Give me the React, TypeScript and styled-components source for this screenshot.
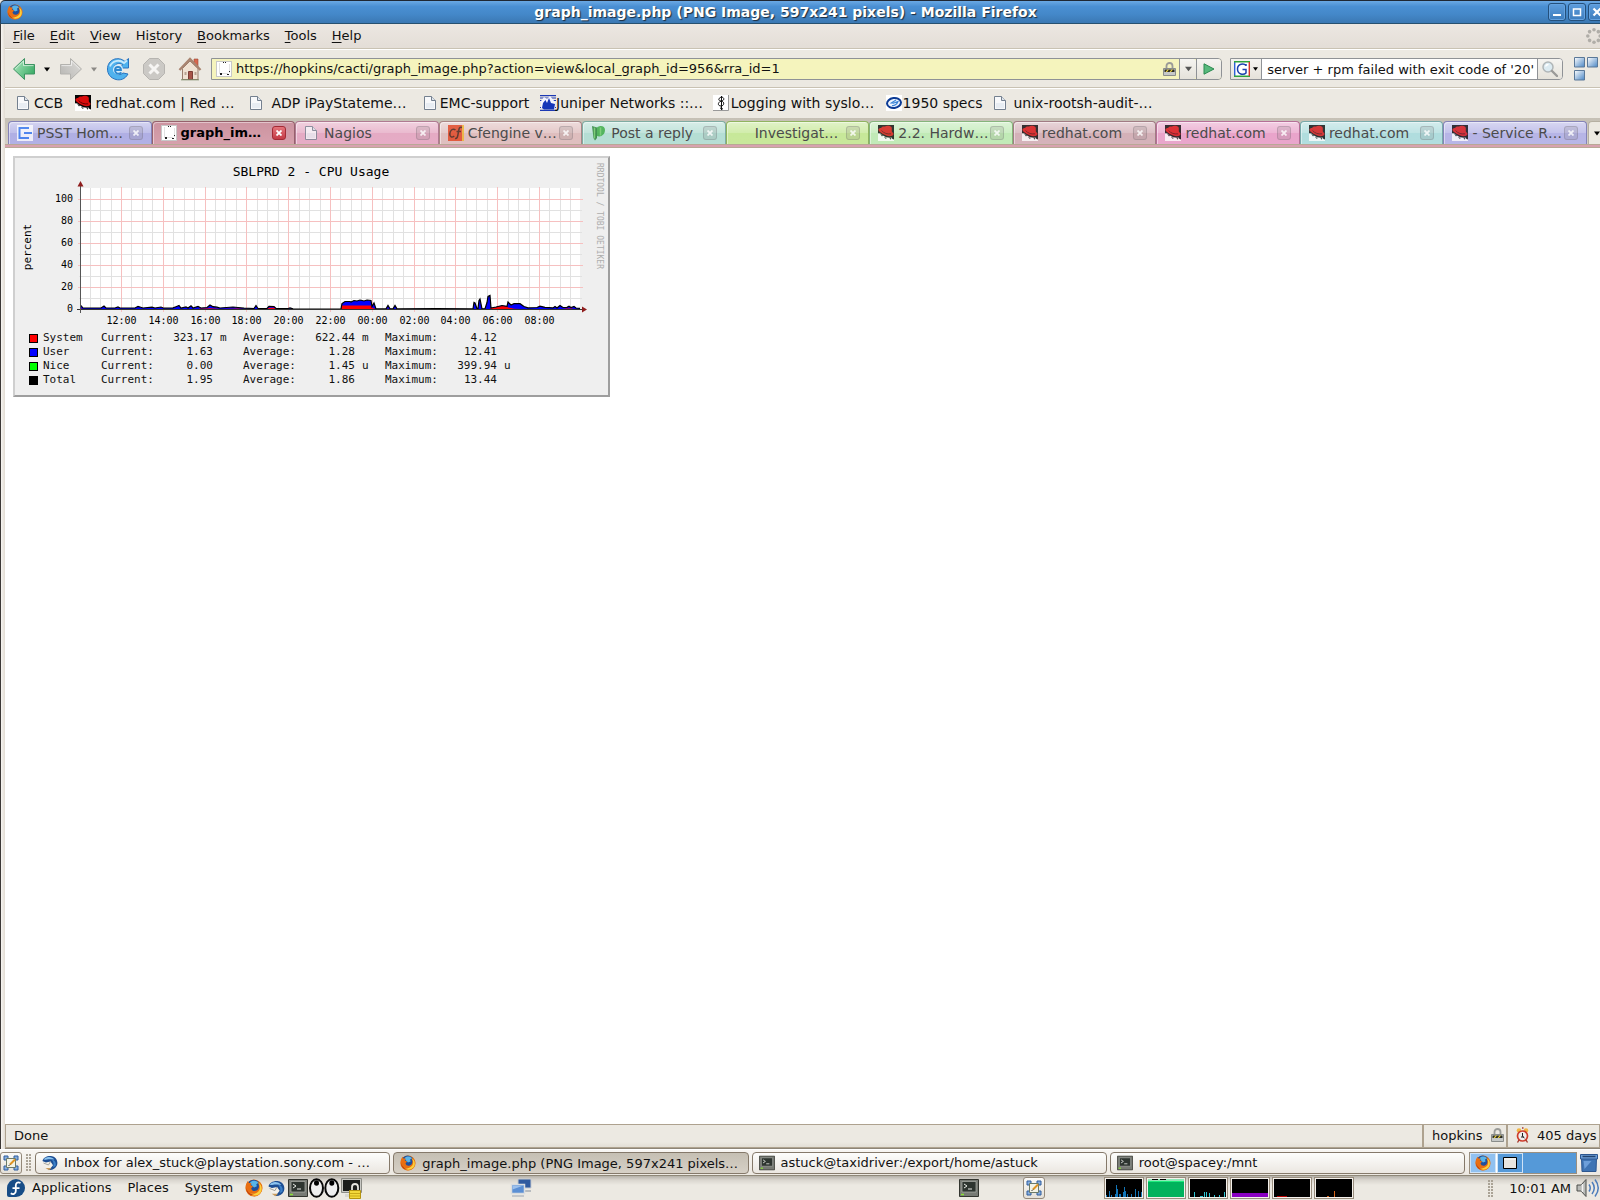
import React from "react";
import styled, { createGlobalStyle, css } from "styled-components";

const GlobalStyle = createGlobalStyle`
  *, *::before, *::after { box-sizing: border-box; }
  body { margin: 0; background: #ece9e2; overflow: hidden; }
  body, button, input { font-family: "DejaVu Sans", sans-serif; font-size: 13px; color: #111; }
  button { padding: 0; margin: 0; border: 0; background: none; }
  svg { display: block; flex: none; }
  a { color: inherit; text-decoration: none; }
`;

/* ---------- layout ---------- */

const Desktop = styled.div`
  min-height: 100vh;
  display: flex;
  flex-direction: column;
  overflow: hidden;
`;

const Window = styled.section`
  flex: 1;
  display: flex;
  flex-direction: column;
`;

const TitleBar = styled.header`
  height: 24px;
  display: flex;
  align-items: center;
  padding: 0 0 0 6px;
  border-top: 1px solid #1f2733;
  border-bottom: 1px solid #27506f;
  border-left: 1px solid #27405a;
  border-top-left-radius: 5px;
  background: linear-gradient(#6aa8e4, #4a8fd3 25%, #4488c9 60%, #3b78b3);
  overflow: hidden;
`;

const WindowTitle = styled.h1`
  flex: 1;
  margin: 0;
  font-size: 14px;
  line-height: 20px;
  text-align: center;
  color: #fff;
  text-shadow: 1px 1px 1px #1c2a3a;
`;

const WindowControls = styled.div`
  display: flex;
  gap: 2px;
  margin-right: -6px;
`;

const ControlButton = styled.button`
  width: 18px;
  height: 18px;
  display: grid;
  place-items: center;
  border: 1px solid #24507c;
  border-radius: 3px;
  background: linear-gradient(#5d9ddd, #3d7dbd);
  box-shadow: inset 0 0 0 1px #64a2e0;
`;

const Body = styled.div`
  flex: 1;
  display: flex;
  flex-direction: column;
  border-left: 1px solid #3c3836;
  padding-left: 4px;
  background: linear-gradient(90deg, #f7f5f2, #e2dcd3 4px);
`;

const barEdge = css`
  border-bottom: 1px solid #fff;
  box-shadow: inset 0 -1px 0 #c9c2b3;
`;

const MenuBar = styled.nav`
  height: 26px;
  display: flex;
  align-items: center;
  padding-bottom: 2px;
  background: linear-gradient(#ece7e2, #e3ddd6);
  overflow: hidden;
  ${barEdge}
`;

const MenuButton = styled.button`
  padding: 0 7px 0 8px;
  line-height: 20px;
  & > u { text-underline-offset: 2px; text-decoration-thickness: 1px; }
`;

const Throbber = styled.div`
  margin-left: auto;
  margin-right: -2px;
`;

const NavBar = styled.div`
  height: 39px;
  display: flex;
  align-items: center;
  padding: 0 2px 0 7px;
  background: #ece9e2;
  overflow: hidden;
  ${barEdge}
`;

const NavButton = styled.button<{ $gap?: number }>`
  width: 24px;
  height: 24px;
  display: grid;
  place-items: center;
  margin-right: ${(p) => p.$gap ?? 0}px;
`;

const NavArrow = styled.button<{ $gap: number }>`
  width: 11px;
  height: 24px;
  display: grid;
  place-items: center;
  margin: 0 ${(p) => p.$gap}px 0 5px;
`;

const AddressBox = styled.form`
  flex: 1;
  display: flex;
  height: 22px;
  border: 1px solid #8f9296;
  border-radius: 0 4px 4px 0;
  background: #f5f4bd;
  align-items: center;
  padding-left: 4px;
`;

const AddressInput = styled.input`
  flex: 1;
  min-width: 0;
  border: 0;
  padding: 0 4px;
  background: transparent;
  outline: none;
  line-height: 18px;
`;

const BoxButton = styled.button<{ $width: number; $side?: "left" | "right" }>`
  width: ${(p) => p.$width}px;
  height: 20px;
  flex: none;
  display: flex;
  align-items: center;
  justify-content: center;
  gap: 3px;
  border: 0 solid #8f9296;
  border-${(p) => (p.$side === "right" ? "right" : "left")}-width: 1px;
  border-radius: ${(p) => (p.$side === "right" ? "0" : "0 3px 3px 0")};
  background: linear-gradient(#f5f4f1, #e5e2da);
`;

const SearchBox = styled.form`
  width: 333px;
  height: 22px;
  margin: 0 11px 0 8px;
  display: flex;
  border: 1px solid #8f9296;
  border-radius: 0 4px 4px 0;
  background: #fff;
`;

const SearchClip = styled.div`
  flex: 1;
  margin: 0 3px;
  display: flex;
  justify-content: flex-end;
  overflow: hidden;
`;

const SearchInput = styled.input`
  flex: none;
  width: 300px;
  padding: 0;
  border: 0;
  outline: none;
  text-align: right;
  background: transparent;
`;

const BookmarkBar = styled.nav`
  height: 29px;
  display: flex;
  align-items: center;
  padding: 0 0 2px 11px;
  background: #ece9e2;
  overflow: hidden;
`;

const Bookmark = styled.a<{ $width: number }>`
  width: ${(p) => p.$width}px;
  flex: none;
  display: flex;
  align-items: center;
  font-size: 14px;
  line-height: 20px;
  white-space: nowrap;
  & > span { flex: 1; text-align: center; padding-right: 10px; }
`;

const TabStrip = styled.div`
  display: flex;
  height: 26px;
  padding: 3px 0 0 3px;
  background: linear-gradient(#c5c0b5, #d4d0c6);
  overflow: hidden;
`;

const Tab = styled.div<{ $tint: string; $edge: string; $active?: boolean }>`
  flex: 1 1 0;
  min-width: 0;
  display: flex;
  align-items: center;
  padding: 0 8px;
  border: 1px solid ${(p) => p.$edge};
  border-bottom: 0;
  border-radius: 4px 4px 0 0;
  box-shadow: inset 1px 1px 0 rgba(255, 255, 255, 0.45);
  background: ${(p) =>
    p.$active
      ? "linear-gradient(#cc93a0, #d6a0ac)"
      : `linear-gradient(rgba(255,255,255,0.5), rgba(255,255,255,0.25) 50%, rgba(255,255,255,0.08) 50%, rgba(255,255,255,0.1)), ${p.$tint}`};
`;

const TabButton = styled.button<{ $active?: boolean }>`
  flex: 1;
  min-width: 0;
  display: flex;
  align-items: center;
  gap: 4px;
  font-size: ${(p) => (p.$active ? 13 : 14)}px;
  line-height: 20px;
  white-space: nowrap;
  color: ${(p) => (p.$active ? "#000" : "#4b4b4b")};
  font-weight: ${(p) => (p.$active ? "bold" : "normal")};
  & > svg { opacity: ${(p) => (p.$active ? 1 : 0.78)}; }
`;

const TabClose = styled.button<{ $active?: boolean }>`
  width: 14px;
  height: 14px;
  flex: none;
  display: grid;
  place-items: center;
  border-radius: 3px;
  border: 1px solid ${(p) => (p.$active ? "#a32a35" : "rgba(90,80,90,0.22)")};
  background: ${(p) => (p.$active ? "linear-gradient(#e4747b, #c43a45)" : "rgba(120,110,115,0.16)")};
`;

const TabMenu = styled.button`
  width: 24px;
  margin-left: 1px;
  margin-right: -12px;
  padding-left: 5px;
  display: flex;
  align-items: center;
  border: 1px solid #b5afa2;
  border-bottom: 0;
  border-radius: 4px 4px 0 0;
  background: #ece9e2;
`;

const TabEdge = styled.div`
  height: 4px;
  border-top: 1px solid #b9a896;
  border-bottom: 1px solid #b9a896;
  background: #d8a2af;
`;

const Viewport = styled.main`
  flex: 1;
  padding: 8px;
  background: #fff;
`;

/* ---------- graph ---------- */

const Graph = styled.figure`
  width: 597px;
  height: 241px;
  margin: 0;
  background: #efefef;
  border: 2px solid;
  border-color: #cfcfcf #9e9e9e #9e9e9e #cfcfcf;
  font-family: "DejaVu Sans Mono", monospace;
`;

const Plot = styled.svg`
  font-family: "DejaVu Sans Mono", monospace;
  fill: #000;
`;

const Legend = styled.table`
  margin-left: 14px;
  border-collapse: collapse;
  table-layout: fixed;
  width: 498px;
  font-size: 11px;
  line-height: 14px;
  & th, & td { padding: 0; height: 14px; font-weight: normal; text-align: left; white-space: nowrap; }
`;

const Value = styled.td`
  && { text-align: right; }
`;

const Unit = styled.td`
  && { padding-left: 7px; }
`;

const Swatch = styled.span<{ $color: string }>`
  display: block;
  width: 9px;
  height: 9px;
  border: 1px solid #000;
  background: ${(p) => p.$color};
`;

/* ---------- status bar and panels ---------- */

const StatusBar = styled.footer`
  height: 25px;
  display: flex;
  background: linear-gradient(#ece9e2 75%, #e0dcd3);
  border-bottom: 1px solid #8d8577;
`;

const StatusCell = styled.div<{ $width?: number }>`
  ${(p) => (p.$width ? `width: ${p.$width}px;` : "flex: 1;")}
  display: flex;
  align-items: center;
  gap: 8px;
  padding: 0 0 2px 8px;
  border: 1px solid #aea28f;
  white-space: nowrap;
`;

const Panel = styled.div<{ $height: number }>`
  height: ${(p) => p.$height}px;
  display: flex;
  align-items: center;
  overflow: hidden;
  background: ${(p) => (p.$height === 26 ? "linear-gradient(#f8f6f3, #ece8e1)" : "linear-gradient(#b5b1a9, #d9d5ce 4px, #ece9e2 9px)")};
  border-top: 1px solid ${(p) => (p.$height === 26 ? "#fff" : "#8f8878")};
`;

const IconButton = styled.button<{ $framed?: boolean }>`
  width: 22px;
  height: 22px;
  flex: none;
  display: grid;
  place-items: center;
  ${(p) => p.$framed && "border: 1px solid #94897a; border-radius: 3px; background: linear-gradient(#fbfaf8, #e4e0d8);"}
`;

const Handle = styled.div`
  width: 5px;
  height: 17px;
  margin: 0 4px;
  flex: none;
  background: radial-gradient(circle at 1px 1px, #aaa396 1px, transparent 1px) 0 0 / 3px 3px;
`;

const TaskList = styled.div`
  flex: 1;
  display: flex;
  gap: 3px;
  min-width: 0;
`;

const Task = styled.button<{ $active?: boolean }>`
  flex: 1 1 0;
  min-width: 0;
  height: 22px;
  display: flex;
  align-items: center;
  gap: 6px;
  padding: ${(p) => (p.$active ? "1px 6px 0" : "0 6px")};
  border: 1px solid #85796a;
  border-radius: 4px;
  background: ${(p) => (p.$active ? "linear-gradient(#c5bfb3, #d6d0c6)" : "linear-gradient(#fdfdfc, #ebe7e1)")};
  white-space: nowrap;
`;

const Switcher = styled.div`
  width: 108px;
  height: 22px;
  margin: 0 1px 0 4px;
  display: flex;
  border: 1px solid #9a8f7f;
  background: #5599d8;
`;

const Workspace = styled.button<{ $current?: boolean }>`
  width: 27px;
  display: grid;
  place-items: center;
  border-right: 1px solid ${(p) => (p.$current ? "#fff" : "transparent")};
  background: ${(p) => (p.$current ? "#91c1f0" : "#5599d8")};
  box-shadow: inset 0 0 0 1px #cfe3f7;
`;

const BlankSpace = styled.div`
  flex: 1;
`;

const PanelMenu = styled.button`
  margin-right: 2px;
  padding: 0 7px;
  line-height: 20px;
`;

const Launchers = styled.div`
  display: flex;
  align-items: center;
  margin-left: 1px;
`;

const PanelGroup = styled.div<{ $width: number }>`
  width: ${(p) => p.$width}px;
  flex: none;
  display: flex;
  align-items: center;
`;

const Monitor = styled.div`
  width: 40px;
  height: 22px;
  margin-right: 2px;
  flex: none;
  border: 1px solid #9a8f7f;
  padding: 1px;
  background: #f4f1ec;
`;

const Clock = styled.time`
  margin: 0 5px 0 12px;
  white-space: nowrap;
`;

/* ---------- icons ---------- */

const Firefox = ({ size = 16 }: { size?: number }) => (
  <svg width={size} height={size} viewBox="0 0 16 16">
    <circle cx="8" cy="8" r="7.6" fill="#e8720f" />
    <circle cx="7.6" cy="6.4" r="5.8" fill="#1f4f9c" />
    <path d="M4.5 3.2C6 .8 10.5 1 12 3.4L10 4.6 10.6 6.5 8 7.5 6 5.6Z" fill="#58b4e8" />
    <path d="M1 4.5 2.4 1.8 3.5 3.5 5.8 3.6 4.8 5.4 7.2 6.6 5.5 8.2C6 11.3 10 11.4 11.6 9.2 13 7.3 12.4 4.6 11.3 2.9 14.3 4.2 15.5 7 14.8 10 13.8 14 10 15.8 6.8 15.2 2 14.2-.2 9.2 1 4.5Z" fill="#e96f12" />
    <path d="M11.8 3.2C15.4 5.500 15.800 10.200 13.200 12.800 10.500 15.500 6 15.200 3.800 12.800 8 14 12 12.500 13 9 13.500 6.800 12.800 4.800 11.800 3.200Z" fill="#fbd03b" />
    <path d="M1.200 8C2 12 5 14 8 13.800 5 15.500 1 12.500 1.200 8Z" fill="#b93a10" />
  </svg>
);

const Thunderbird = ({ size = 17 }: { size?: number }) => (
  <svg width={size} height={size} viewBox="0 0 16 16">
    <path d="M.5 6C1 2.500 6 .3 10 1.200 14 2 16.400 6 15 10.300 13.600 14.200 9 15.800 6 14.800 9 13 5 12 4 8 3 6.500 1.500 7 .5 6Z" fill="#1d4e93" />
    <path d="M1.500 4.500C4 .8 10 1.200 12.500 4.600L8.500 4.200C5.500 4 3.500 5 1.500 4.500Z" fill="#8cc4f0" />
    <path d="M1.500 8 8.500 6.500 11 10.200 8.500 13.200C5.500 13.800 2.500 12.500 1.500 8Z" fill="#f4f1ea" />
    <path d="M1.500 8 6.500 10 8.500 6.500" fill="none" stroke="#9b9b96" strokeWidth=".9" />
    <path d="M9.500 4.500C13 5 14.600 8 13.500 11L11 12.500C12.300 9 11.500 6.500 9.500 4.500Z" fill="#3c80c8" />
    <path d="M3.500 13 9.500 13 7 15.200Z" fill="#c99a5a" />
  </svg>
);

const PageIcon = () => (
  <svg width="16" height="16" viewBox="0 0 16 16">
    <path d="M1.5 1.5h7l4 4v9h-11z" fill="#f8f9fb" stroke="#74808f" />
    <path d="M8.5 1.5v4h4" fill="#dfe5ec" stroke="#74808f" />
    <path d="M3 8h8v5H3z" fill="#e8edf3" />
  </svg>
);

const GraphPage = () => (
  <svg width="16" height="16" viewBox="0 0 16 16" shapeRendering="crispEdges">
    <path d="M.5.5h15v15H.5z" fill="#fff" stroke="#c8c8c8" />
    <path d="M3 2v10M13 3v9M3 12h9" stroke="#e2e2e2" fill="none" />
    <path d="M7 1h1v1H7zM9 1h1v1H9zM4 12h2v2H4zM13 10h1v1h-1zM11 13h2v1h-2z" fill="#222" />
  </svg>
);

const RedHat = () => (
  <svg width="16" height="16" viewBox="0 0 16 16">
    <path d="M0 0h16v16H0z" fill="#050505" />
    <path d="M0 8.500C2 8 3 9 5 10.500 8 12.500 11 13 13.500 12.500L14.500 14 16 14.500V16H0Z" fill="#fff" />
    <path d="M3.500 2.500C4.500 1 6 1.800 7 1.500 8.500.300 12 .8 13.500 2 14.200 3.500 13.500 5.500 14 7 15.500 8 16 9 15 10.200 12.500 12 8 11 5 9 2.500 7.500 0 6 .5 4 1.200 3 2.500 3.800 3.500 2.500Z" fill="#d90b0b" />
    <path d="M3.500 5.500C5.500 8 9.500 9.500 13 8.800" stroke="#5a0000" strokeWidth=".9" fill="none" />
    <path d="M2 8.500 5 10.200 4 11.500ZM6 12l3 1-1.500.8zM11.500 13l2 .2-1 1.500z" fill="#111" />
  </svg>
);

const Psst = () => (
  <svg width="16" height="16" viewBox="0 0 16 16">
    <path d="M0 0h16v16H0z" fill="#fff" />
    <path d="M12 3H2.500v10H12M7 8h8" stroke="#3478f0" strokeWidth="2" fill="none" />
  </svg>
);

const Cfengine = () => (
  <svg width="16" height="16" viewBox="0 0 16 16">
    <path d="M0 0h16v16H0z" fill="#e2401c" />
    <path d="M14 0h2v16h-2z" fill="#efb52a" />
    <path d="M7.500 5C5 3 2 5 1.800 9c0 3 2 4 4.500 2M14 2.500C11 1.500 11 4 10.400 7 9.800 11 9.500 14 7 13.500M8.500 6.500h4.500" stroke="#40160a" strokeWidth="1.500" fill="none" />
  </svg>
);

const PostReply = () => (
  <svg width="16" height="16" viewBox="0 0 16 16">
    <path d="M1 1 6 2.500V13l-2 2.500L2.500 13z" fill="#1f7a2d" />
    <path d="M6 2.500C9 0 14 .5 14 5s-4 7.500-8 6z" fill="#35a83c" />
    <path d="M3.500 2.500v11M9.500 2.500v8" stroke="#6cc860" strokeWidth="1.500" />
  </svg>
);

const Juniper = () => (
  <svg width="16" height="16" viewBox="0 0 16 16">
    <path d="M0 .600h16M0 3h16M0 5.500h16M0 12.500h16M0 15.300h16" stroke="#1c39b4" strokeWidth="1.200" />
    <path d="M1 13V6l3-4 3 2 3-3 5 6v6z" fill="#f2f4ff" />
    <path d="M2 13 3 8l2.500-3L7 8l2-5L11 8l4 1-1 5.500H4z" fill="#1436b8" />
  </svg>
);

const Syslog = () => (
  <svg width="16" height="16" viewBox="0 0 16 16">
    <path d="M0 0h15.500v15.500H0z" fill="#fff" />
    <path d="M15.500 0v15.500H0" stroke="#999" fill="none" />
    <path d="M8.500 1v14M8.500 2C5 3 5 6 8 6s4-3 1-4M8 6c-4 2-3 5 0 5s4-4 .5-5M7 13l3 1" stroke="#111" strokeWidth="1" fill="none" />
  </svg>
);

const Specs = () => (
  <svg width="16" height="16" viewBox="0 0 16 16">
    <path d="M0 0h16v16H0z" fill="#fff" />
    <ellipse cx="8" cy="8" rx="7" ry="5" fill="#eef5ff" stroke="#0c3b94" strokeWidth="2" transform="rotate(-8 8 8)" />
    <path d="M4.500 8.500 10 5M6 10.500C8 11 11 9.500 12 6.500L6.500 8.500" stroke="#3d86d8" strokeWidth="1.200" fill="none" />
  </svg>
);

const Caret = ({ color = "#000", wide = 5 }: { color?: string; wide?: number }) => (
  <svg width={wide} height={wide - 1} viewBox="0 0 6 4"><path d="M0 0h6L3 4z" fill={color} /></svg>
);

const Arrow = ({ back }: { back?: boolean }) => (
  <svg width="24" height="24" viewBox="0 0 24 24">
    <defs>
      <linearGradient id={back ? "ga" : "gb"} x1="0" y1="0" x2="1" y2="0.6">
        <stop offset="0" stopColor={back ? "#b4ecc4" : "#dcdbd8"} />
        <stop offset="1" stopColor={back ? "#3fae6a" : "#bdbcb9"} />
      </linearGradient>
    </defs>
    <g transform={back ? undefined : "translate(24 0) scale(-1 1)"}>
      <path d="M1.500 12 12.500 1.500V7.500h10v9.500h-10V22.500Z" fill={`url(#${back ? "ga" : "gb"})`} stroke={back ? "#3d9463" : "#b3b2ae"} />
      <path d="M3.200 12 11.500 4v4.600h10" fill="none" stroke="#fff" strokeOpacity=".6" />
    </g>
  </svg>
);

const Reload = () => (
  <svg width="24" height="24" viewBox="0 0 24 24">
    <path d="M22.500 1.500v9.500h-9l3.300-3.300C13 5 8 7 8 12s5.500 7.500 9 4l5 1C19 22.500 14 23.500 10 22.500 4.500 21 1.500 17 1.500 12 1.500 2.500 12-1.500 19 4.500Z" fill="#4fb2ee" stroke="#2873c0" />
    <path d="M4 9.500C6 4 13 1.800 18 6l3-2.500" stroke="#c6e9fc" strokeWidth="1.800" fill="none" />
    <circle cx="12" cy="12.500" r="5" fill="#d8eefb" />
    <path d="M9.500 13h5.500c0-4-6-4-6 0s4 4.500 6.500 2.500" stroke="#2d88d0" strokeWidth="1.800" fill="none" />
  </svg>
);

const Stop = () => (
  <svg width="24" height="24" viewBox="0 0 24 24">
    <path d="M7.500 1.500h9l6 6v9l-6 6h-9l-6-6v-9z" fill="#cbc9c5" stroke="#b6b4b0" />
    <path d="m7.500 7.500 9 9m0-9-9 9" stroke="#f6f5f3" strokeWidth="3" />
  </svg>
);

const Home = () => (
  <svg width="24" height="24" viewBox="0 0 24 24">
    <path d="M16 2h4v8h-4z" fill="#d9674d" stroke="#9c4a38" strokeWidth=".6" />
    <path d="M4.500 11.500 12 4l8 7.500V22.500h-15.500z" fill="#f0e2d3" stroke="#9b7e6d" />
    <path d="M1.500 13 12 2l10.500 11" fill="none" stroke="#a98470" strokeWidth="2.400" />
    <path d="M10.500 14.500h4v8h-4z" fill="#a85448" stroke="#7c3e36" />
    <path d="M6.500 15h2v3h-2zM16.500 15h2v3h-2z" fill="#b9a494" />
    <path d="M3 22.800h18" stroke="#7d8a6a" />
  </svg>
);

const Padlock = () => (
  <svg width="13" height="14" viewBox="0 0 13 14">
    <path d="M3.500 7V4c0-4 6-4 6 0v3" fill="none" stroke="#9a9b98" strokeWidth="1.800" />
    <path d="M.5 6.500h12v7H.500z" fill="#c6c9c8" stroke="#8a8d8b" />
    <path d="M1.500 7.500h10v2.500h-10z" fill="#2b2b20" />
    <path d="m2.500 10 2-2.500h1.500L4 10zm4 0 2-2.500h1.500L8 10z" fill="#e9cf3a" />
  </svg>
);

const Play = () => (
  <svg width="12" height="12" viewBox="0 0 12 12"><path d="M1 .8 11 6 1 11.200z" fill="#57b97c" stroke="#2b8a50" /></svg>
);

const GoogleMark = () => (
  <svg width="16" height="16" viewBox="0 0 16 16">
    <path d="M.5.5h15v15H.500z" fill="#fff" />
    <path d="M.7 16V0" stroke="#2c60d8" strokeWidth="1.400" />
    <path d="M0 .7h16M0 15.300h16" stroke="#2fa23c" strokeWidth="1.400" />
    <path d="M15.300 1v14" stroke="#d4332a" strokeWidth="1.400" />
    <path d="M12 5V3M12 4.500C10 2 3.500 2.500 3.500 8s6 6.500 8.500 4V8.500H8.500" stroke="#1c3fae" strokeWidth="1.500" fill="none" />
  </svg>
);

const Magnifier = () => (
  <svg width="16" height="16" viewBox="0 0 16 16">
    <circle cx="6" cy="6" r="5" fill="#dcebf2" stroke="#b0b6b8" strokeWidth="1.500" />
    <path d="m10 10 5 5" stroke="#9a9a98" strokeWidth="2.400" strokeLinecap="round" />
    <path d="M3.500 5.500C4 4 5 3.500 6.500 3.500" stroke="#fff" strokeWidth="1.300" fill="none" />
  </svg>
);

const Blocks = () => (
  <svg width="24" height="24" viewBox="0 0 24 24">
    <defs>
      <linearGradient id="blk" x1="0" y1="0" x2="1" y2="1"><stop offset="0" stopColor="#fff" /><stop offset="1" stopColor="#4a86c5" /></linearGradient>
    </defs>
    {[[0, 0], [13, 0], [0, 13]].map(([x, y]) => (
      <path key={`${x}-${y}`} d={`M${x + 0.5} ${y + 0.5}h10v9.500h-10z`} fill="url(#blk)" stroke="#5a7898" />
    ))}
  </svg>
);

const Terminal = ({ size = 20 }: { size?: number }) => (
  <svg width={size} height={size} viewBox="0 0 20 20">
    <path d="M.5 1.500h19v17H.500z" fill="#777a74" stroke="#33352f" />
    <path d="M3 3.500h14V14H3z" fill="#2e3530" stroke="#b0b2ac" strokeWidth=".7" />
    <path d="m5 6 3 2-3 2M9 11h4" stroke="#e8ebe6" fill="none" />
    <path d="M2 16.500h3" stroke="#8ae234" strokeWidth="1.500" />
  </svg>
);

const ShowDesktop = () => (
  <svg width="16" height="16" viewBox="0 0 16 16">
    <path d="M1 1h4v4H1zM11 1h4v4h-4zM1 11h4v4H1zM11 11h4v4h-4z" fill="#86aee0" stroke="#2f5c9c" />
    <path d="M3.500 3.500h9v9h-9z" fill="#f3f3e6" stroke="#6c7a68" />
    <path d="m7 9.500 5-5" stroke="#e09422" strokeWidth="2" />
    <path d="m5.500 11 1.500-1.500" stroke="#333" />
  </svg>
);

const Fedora = () => (
  <svg width="18" height="18" viewBox="0 0 18 18">
    <path d="M0 9a9 9 0 1 1 9 9H2a2 2 0 0 1-2-2z" fill="#174d87" />
    <path d="M13.500 4C10.500 2.500 8.800 4 8.800 6.500V12c0 3-3 3.800-5 2.200M5.500 9.200h7" stroke="#fff" strokeWidth="1.800" fill="none" />
  </svg>
);

const Eyes = () => (
  <svg width="31" height="20" viewBox="0 0 31 20">
    {[7.5, 22.8].map((x) => (
      <g key={x}>
        <ellipse cx={x} cy="10" rx="6.500" ry="8.800" fill="#efefef" stroke="#080808" strokeWidth="2" />
        <ellipse cx={x} cy="5" rx="2.500" ry="2.700" fill="#000" />
      </g>
    ))}
  </svg>
);

const LockScreen = () => (
  <svg width="21" height="21" viewBox="0 0 21 21">
    <path d="M.5.5h20v14H.500z" fill="#c9c9c4" stroke="#8c8c86" />
    <path d="M2 2h17v11H2z" fill="#1c1e1c" />
    <path d="M4 16h8v3H4z" fill="#d7d7d2" />
    <path d="M11 13V9c0-4 6-4 6 0v4" fill="none" stroke="#e6e6e0" strokeWidth="1.800" />
    <path d="M8.500 12.500h11v8h-11z" fill="#f3d83a" stroke="#b59410" />
    <path d="M9 15.500h10M9 18h10" stroke="#c9a917" />
  </svg>
);

const Network = () => (
  <svg width="22" height="20" viewBox="0 0 22 20">
    <path d="M8 1h13v9H8z" fill="#2f5a9f" stroke="#c7cbd0" />
    <path d="M13 13h8" stroke="#b8bcc0" strokeWidth="2" />
    <path d="M1.500 6.500h13v9h-13z" fill="#5b8fd4" stroke="#dadde0" strokeWidth="1.500" />
    <path d="M2.500 7.500h11l-11 4z" fill="#9cc0ec" />
    <path d="M2 18h12" stroke="#c4c7ca" strokeWidth="2" />
  </svg>
);

const AlarmClock = () => (
  <svg width="13" height="16" viewBox="0 0 13 16">
    <circle cx="3" cy="3.500" r="2.300" fill="#f2b544" /><circle cx="10" cy="3.500" r="2.300" fill="#f2b544" />
    <circle cx="6.500" cy="9" r="5" fill="#eee" stroke="#cd3d2d" strokeWidth="1.700" />
    <path d="M6.500 6v3.500L8.500 11M5 10h3" stroke="#222" fill="none" />
    <path d="m3 13-1.500 2.500M10 13l1.500 2.500M6 1h1.500" stroke="#a8382c" strokeWidth="1.400" />
  </svg>
);

const Trash = () => (
  <svg width="18" height="18" viewBox="0 0 18 18">
    <path d="M1.500 4h15l-.5 13.500H2z" fill="#3f74b4" stroke="#2e578f" />
    <path d="M.5.500h17V5H.500z" fill="#6c9dd6" stroke="#2e578f" />
    <path d="M2.500 2.500h13" stroke="#24446e" strokeWidth="1.500" />
    <path d="M3.500 7h8l-7 8z" fill="#6d9fda" />
  </svg>
);

const Speaker = () => (
  <svg width="24" height="20" viewBox="0 0 24 20">
    <path d="M1 7h4l5-5.500v17L5 13H1z" fill="#b9bbb8" stroke="#4c4e4b" />
    <path d="M6.500 6v8" stroke="#f2f2f0" strokeWidth="1.500" />
    <path d="M13 6.500q2.500 3.500 0 7M16 4q4.500 6 0 12M19 1.500q6.500 8.500 0 17" stroke="#4d7dbb" strokeWidth="1.500" fill="none" />
  </svg>
);

const Cross = ({ color }: { color: string }) => (
  <svg width="6" height="6" viewBox="0 0 6 6"><path d="m.5.5 5 5m0-5-5 5" stroke={color} strokeWidth="1.800" /></svg>
);

/* ---------- data ---------- */

const menus = [["", "F", "ile"], ["", "E", "dit"], ["", "V", "iew"], ["Hi", "s", "tory"], ["", "B", "ookmarks"], ["", "T", "ools"], ["", "H", "elp"]];

const bookmarks: { label: string; width: number; icon: React.ReactNode }[] = [
  { label: "CCB", width: 59, icon: <PageIcon /> },
  { label: "redhat.com | Red …", width: 174, icon: <RedHat /> },
  { label: "ADP iPayStateme…", width: 174, icon: <PageIcon /> },
  { label: "EMC-support", width: 117, icon: <PageIcon /> },
  { label: "Juniper Networks ::…", width: 173, icon: <Juniper /> },
  { label: "Logging with syslo…", width: 173, icon: <Syslog /> },
  { label: "1950 specs", width: 107, icon: <Specs /> },
  { label: "unix-rootsh-audit-…", width: 174, icon: <PageIcon /> },
];

const tabs: { label: string; tint: string; edge: string; icon: React.ReactNode; active?: boolean }[] = [
  { label: "PSST Hom…", tint: "#a9a8e2", edge: "#8583b8", icon: <Psst /> },
  { label: "graph_im…", tint: "#d6a0ac", edge: "#96616c", icon: <GraphPage />, active: true },
  { label: "Nagios", tint: "#e3a3bf", edge: "#b07a92", icon: <PageIcon /> },
  { label: "Cfengine v…", tint: "#dcb8b8", edge: "#aa8686", icon: <Cfengine /> },
  { label: "Post a reply", tint: "#aedbd0", edge: "#7faca2", icon: <PostReply /> },
  { label: "Investigat…", tint: "#c2e690", edge: "#90b460", icon: <svg width="16" height="16" /> },
  { label: "2.2. Hardw…", tint: "#bbe8b0", edge: "#86b47c", icon: <RedHat /> },
  { label: "redhat.com", tint: "#d0aab2", edge: "#a17c84", icon: <RedHat /> },
  { label: "redhat.com", tint: "#e79cc6", edge: "#b56f97", icon: <RedHat /> },
  { label: "redhat.com", tint: "#a9dadb", edge: "#79a9aa", icon: <RedHat /> },
  { label: "- Service R…", tint: "#b0aee4", edge: "#8583b8", icon: <RedHat /> },
];

const legend = [
  { name: "System", color: "#f00", values: [["323.17", "m"], ["622.44", "m"], ["4.12", ""]] },
  { name: "User", color: "#00f", values: [["1.63", ""], ["1.28", ""], ["12.41", ""]] },
  { name: "Nice", color: "#0f0", values: [["0.00", ""], ["1.45", "u"], ["399.94", "u"]] },
  { name: "Total", color: "#000", values: [["1.95", ""], ["1.86", ""], ["13.44", ""]] },
];

// x, total height, system height
const samples: [number, number, number][] = [
  [68, 4, 1], [70, 1.5, 0.5], [88, 1.5, 0.5], [91, 3.5, 0.5], [93, 1.5, 0.5], [102, 1.5, 0.5], [105, 2.5, 0.5], [107, 1.5, 0.5],
  [122, 1.5, 0.5], [125, 3, 0.5], [130, 1.5, 0.5], [139, 2.3, 0.5], [142, 1.5, 0.5], [148, 2.5, 0.5], [151, 1.3, 0.5],
  [160, 1.6, 0.5], [163, 2.8, 0.5], [166, 4, 0.5], [168, 1.5, 0.5], [173, 2.5, 0.5], [175, 1.5, 0.5], [178, 3.8, 0.5],
  [180, 1.5, 0.5], [185, 3, 0.5], [188, 1.5, 1], [194, 2, 1], [197, 4.5, 1.2], [200, 2.8, 1], [204, 2.3, 0.7], [207, 1.5, 0.5],
  [220, 2.5, 0.7], [225, 2, 1], [231, 1.3, 0.5], [241, 1, 0.3], [243, 4, 0.5], [245, 1, 0.3], [254, 1, 0.3], [256, 3.2, 1.8],
  [261, 3, 1.8], [263, 1, 0.3], [275, 1, 0.3], [277, 1.6, 0.2], [280, 0.6, 0.1], [328, 0.5, 0.1], [329, 6, 4], [332, 8, 4],
  [337, 8, 4], [338, 7.5, 4], [341, 9, 4], [344, 8.5, 4], [347, 9.5, 4], [351, 8.5, 4], [354, 9.5, 4], [358, 9, 4], [359, 3, 2], [361, 6.5, 1], [363, 0.6, 0.2],
  [373, 0.6, 0.2], [375, 4, 0.8], [377, 0.8, 0.2], [380, 0.6, 0.2], [382, 4, 0.3], [384, 0.6, 0.1], [423, 0.8, 0.1],
  [460, 0.6, 0.1], [461, 7, 0.3], [462, 6.5, 0.3], [464, 0.7, 0.2], [465, 1, 0.3], [466, 9, 0.3], [467, 10.5, 0.3], [469, 0.7, 0.2], [472, 0.8, 0.3],
  [474, 7, 0.5], [475, 13, 0.5], [477, 14, 0.5], [478, 1.5, 1.5], [483, 2.5, 2.2], [489, 4, 3.6], [494, 3.2, 3], [495, 7.5, 2], [498, 4.5, 1.5],
  [501, 5.8, 0.8], [507, 5.8, 0.5], [511, 3, 0.5], [515, 1.6, 0.4], [524, 2, 0.3], [527, 3.3, 0.3], [532, 2.2, 0.3],
  [540, 1.6, 0.5], [542, 3, 0.5], [544, 1.5, 0.5], [547, 4, 0.5], [550, 2, 0.5], [554, 2.2, 1], [556, 3.3, 1], [558, 2, 1], [561, 3, 0.5], [563, 1.5, 0.3], [567, 1.2, 0.3],
];

const BASE = 153.5;
const area = (series: 1 | 2) => `M68 ${BASE} ${samples.map((s) => `L${s[0]} ${BASE - s[series]}`).join(" ")} L567 ${BASE}Z`;
const line = `M${samples.map((s) => `${s[0]} ${BASE - s[1]}`).join(" L")}`;
const hours = ["12:00", "14:00", "16:00", "18:00", "20:00", "22:00", "00:00", "02:00", "04:00", "06:00", "08:00"];
const hourX = (i: number) => Math.round(108 + i * 41.8) + 0.5;
const minorX = Array.from({ length: 47 }, (_, i) => i).filter((i) => i % 4 !== 3).map((i) => Math.round(76.6 + i * 10.45) + 0.5);

const CpuPlot = () => (
  <Plot width="593" height="173" viewBox="2 2 593 173" role="img" aria-label="CPU usage over 24 hours">
    <path d="M68 32h499v121H68z" fill="#fff" />
    <g shapeRendering="crispEdges" fill="none">
      {[0, 1, 2, 3, 4].map((i) => (
        <path key={i} d={`M66 ${142.5 - i * 22}H569`} stroke="#e1e1e1" />
      ))}
      {minorX.map((x) => (
        <path key={x} d={`M${x} 32V154`} stroke="#e1e1e1" />
      ))}
      {[1, 2, 3, 4, 5].map((i) => (
        <path key={i} d={`M65 ${153.5 - i * 22}H570`} stroke="#f6c0c0" />
      ))}
      {hours.map((h, i) => (
        <path key={h} d={`M${hourX(i)} 31V156`} stroke="#f6c0c0" />
      ))}
    </g>
    <path d={area(1)} fill="#00f" />
    <path d={area(2)} fill="#f00" />
    <path d={line} fill="none" stroke="#000" strokeWidth="1.200" />
    <path d="M64 153.500H570" stroke="#333" />
    <path d="M67.500 28V157" stroke="#555" />
    <path d="M64.500 30.500 67.500 25l3 5.500zM569 150.500l5 3-5 3z" fill="#8f1d1d" />
    <text x="298" y="20" fontSize="13" textAnchor="middle">SBLPRD 2 - CPU Usage</text>
    <g fontSize="10" textAnchor="end">
      {[0, 20, 40, 60, 80, 100].map((v) => (
        <text key={v} x="60" y={156 - v * 1.1}>{v}</text>
      ))}
    </g>
    <g fontSize="10" textAnchor="middle">
      {hours.map((h, i) => (
        <text key={h} x={hourX(i)} y="168">{h}</text>
      ))}
    </g>
    <text fontSize="11" textAnchor="middle" transform="translate(18 91) rotate(-90)">percent</text>
    <text fontSize="8" fill="#adadad" transform="translate(584 7) rotate(90)">RRDTOOL / TOBI OETIKER</text>
  </Plot>
);

const monitors: { name: string; color: string; d: string }[] = [
  { name: "Processor", color: "#1276b8", d: "M0 16h1v2H0zM3 12h1v6H3zM5 16h1v2H5zM9 15h1v3H9zM10 6h1v12h-1zM11 10h1v8h-1zM13 15h2v3h-2zM17 13h1v5h-1zM18 8h1v10h-1zM19 12h1v6h-1zM21 15h1v3h-1zM25 15h1v3h-1zM29 10h1v8h-1zM32 12h1v6h-1zM35 13h1v5h-1z" },
  { name: "Memory", color: "#00b25c", d: "M0 0h36v18H0z" },
  { name: "Network", color: "#2cc7d3", d: "M4 13h1v5H4zM10 17h3v1h-3zM14 13h1v5h-1zM16 13h1v5h-1zM19 14h1v4h-1zM24 16h1v2h-1zM29 16h1v2h-1zM34 13h1v5h-1z" },
  { name: "Swap", color: "#8a00c2", d: "M0 14h36v4H0z" },
  { name: "Load", color: "#b80000", d: "M3 17h10v1H3z" },
  { name: "Disk", color: "#d86418", d: "M11 17h2v1h-2zM18 12h1v6h-1z" },
];

/* ---------- page ---------- */

const stay = (e: React.FormEvent) => e.preventDefault();

export default function App() {
  return (
    <Desktop>
      <GlobalStyle />
      <Window>
        <TitleBar>
          <Firefox />
          <WindowTitle>graph_image.php (PNG Image, 597x241 pixels) - Mozilla Firefox</WindowTitle>
          <WindowControls>
            <ControlButton aria-label="Minimize"><svg width="10" height="10"><path d="M1 8h8" stroke="#fff" strokeWidth="2" /></svg></ControlButton>
            <ControlButton aria-label="Maximize"><svg width="10" height="10"><path d="M1.500 2h7v6.500h-7z" fill="none" stroke="#fff" strokeWidth="1.500" /></svg></ControlButton>
            <ControlButton aria-label="Close"><svg width="10" height="10"><path d="m1.500 1.500 7 7m0-7-7 7" stroke="#fff" strokeWidth="2.200" /></svg></ControlButton>
          </WindowControls>
        </TitleBar>
        <Body>
          <MenuBar>
            {menus.map(([pre, key, post]) => (
              <MenuButton key={key + post}>{pre}<u>{key}</u>{post}</MenuButton>
            ))}
            <Throbber>
              <svg width="16" height="16" viewBox="0 0 16 16">
                {Array.from({ length: 8 }, (_, i) => (
                  <circle key={i} cx="8" cy="1.800" r="1.800" fill="#b0ada8" transform={`rotate(${i * 45} 8 8)`} />
                ))}
              </svg>
            </Throbber>
          </MenuBar>
          <NavBar>
            <NavButton aria-label="Back"><Arrow back /></NavButton>
            <NavArrow $gap={7} aria-label="Back history"><Caret wide={6} /></NavArrow>
            <NavButton aria-label="Forward"><Arrow /></NavButton>
            <NavArrow $gap={7} aria-label="Forward history"><Caret wide={6} color="#8c8a86" /></NavArrow>
            <NavButton $gap={12} aria-label="Reload"><Reload /></NavButton>
            <NavButton $gap={12} aria-label="Stop"><Stop /></NavButton>
            <NavButton $gap={9} aria-label="Home"><Home /></NavButton>
            <AddressBox onSubmit={stay}>
              <GraphPage />
              <AddressInput aria-label="Address" defaultValue="https://hopkins/cacti/graph_image.php?action=view&local_graph_id=956&rra_id=1" />
              <Padlock />
              <span style={{ width: 3 }} />
              <BoxButton type="button" $width={17} aria-label="Address history"><Caret color="#555" wide={7} /></BoxButton>
              <BoxButton $width={25} aria-label="Go"><Play /></BoxButton>
            </AddressBox>
            <SearchBox onSubmit={stay}>
              <BoxButton type="button" $width={31} $side="right" aria-label="Search engine"><GoogleMark /><Caret /></BoxButton>
              <SearchClip>
                <SearchInput aria-label="Search" defaultValue="server + rpm failed with exit code of '20'" />
              </SearchClip>
              <BoxButton $width={25} aria-label="Search the web"><Magnifier /></BoxButton>
            </SearchBox>
            <NavButton aria-label="Tab overview"><Blocks /></NavButton>
          </NavBar>
          <BookmarkBar>
            {bookmarks.map((b) => (
              <Bookmark key={b.label} href="#" $width={b.width}>{b.icon}<span>{b.label}</span></Bookmark>
            ))}
          </BookmarkBar>
          <TabStrip>
            {tabs.map((t, i) => (
              <Tab key={i} $tint={t.tint} $edge={t.edge} $active={t.active}>
                <TabButton $active={t.active}>{t.icon}{t.label}</TabButton>
                <TabClose $active={t.active} aria-label="Close tab"><Cross color={t.active ? "#fff" : "rgba(255,255,255,0.8)"} /></TabClose>
              </Tab>
            ))}
            <TabMenu aria-label="List all tabs"><Caret wide={6} /></TabMenu>
          </TabStrip>
          <TabEdge />
          <Viewport>
            <Graph>
              <CpuPlot />
              <Legend>
                <colgroup>
                  {[14, 58, 56, 56, 30, 56, 56, 30, 56, 56, 30].map((w, i) => <col key={i} style={{ width: w }} />)}
                </colgroup>
                <tbody>
                  {legend.map((row) => (
                    <tr key={row.name}>
                      <td><Swatch $color={row.color} /></td>
                      <th scope="row">{row.name}</th>
                      {row.values.map(([value, unit], i) => (
                        <React.Fragment key={i}>
                          <td>{["Current:", "Average:", "Maximum:"][i]}</td>
                          <Value>{value}</Value>
                          <Unit>{unit}</Unit>
                        </React.Fragment>
                      ))}
                    </tr>
                  ))}
                </tbody>
              </Legend>
            </Graph>
          </Viewport>
          <StatusBar>
            <StatusCell>Done</StatusCell>
            <StatusCell $width={84}>hopkins<Padlock /></StatusCell>
            <StatusCell $width={93}><AlarmClock />405 days</StatusCell>
          </StatusBar>
        </Body>
      </Window>

      <Panel $height={26}>
        <IconButton $framed aria-label="Show desktop"><ShowDesktop /></IconButton>
        <Handle />
        <TaskList>
          <Task><Thunderbird size={16} />Inbox for alex_stuck@playstation.sony.com - …</Task>
          <Task $active><Firefox />graph_image.php (PNG Image, 597x241 pixels…</Task>
          <Task><Terminal size={16} />astuck@taxidriver:/export/home/astuck</Task>
          <Task><Terminal size={16} />root@spacey:/mnt</Task>
        </TaskList>
        <Switcher>
          <Workspace $current aria-label="Workspace 1"><Firefox /></Workspace>
          <Workspace aria-label="Workspace 2"><svg width="14" height="12"><path d="M.5.500h13v11H.500z" fill="#e8e5df" stroke="#000" /><path d="M1 2h12" stroke="#fff" /></svg></Workspace>
        </Switcher>
        <IconButton aria-label="Trash"><Trash /></IconButton>
      </Panel>

      <Panel $height={25}>
        <PanelGroup $width={510}>
          <span style={{ width: 7 }} />
          <Fedora />
          <PanelMenu>Applications</PanelMenu>
          <PanelMenu>Places</PanelMenu>
          <PanelMenu>System</PanelMenu>
          <Launchers>
            <IconButton aria-label="Firefox"><Firefox size={18} /></IconButton>
            <IconButton aria-label="Thunderbird"><Thunderbird /></IconButton>
            <IconButton aria-label="Terminal"><Terminal /></IconButton>
            <Eyes />
            <IconButton aria-label="Lock screen"><LockScreen /></IconButton>
          </Launchers>
        </PanelGroup>
        <PanelGroup $width={448}><Network /></PanelGroup>
        <PanelGroup $width={65}><IconButton aria-label="Terminal"><Terminal /></IconButton></PanelGroup>
        <PanelGroup $width={81}><IconButton $framed aria-label="Show desktop"><ShowDesktop /></IconButton></PanelGroup>
        {monitors.map((m) => (
          <Monitor key={m.name}>
            <svg width="36" height="18" role="img" aria-label={m.name} shapeRendering="crispEdges">
              <path d="M0 0h36v18H0z" fill="#000" />
              <path d={m.d} fill={m.color} />
              {m.name === "Memory" && <path d="M0 0h36v2H0z" fill="#8fe8b8" />}
              {m.name === "Memory" && <path d="M0 2h36v1H0z" fill="#1dec7c" />}
              {m.name === "Memory" && <path d="M4 0h6v1H4zM12 0h6v1h-6z" fill="#000" />}
            </svg>
          </Monitor>
        ))}
        <BlankSpace />
        <Handle />
        <Clock>10:01 AM</Clock>
        <Speaker />
      </Panel>
    </Desktop>
  );
}
